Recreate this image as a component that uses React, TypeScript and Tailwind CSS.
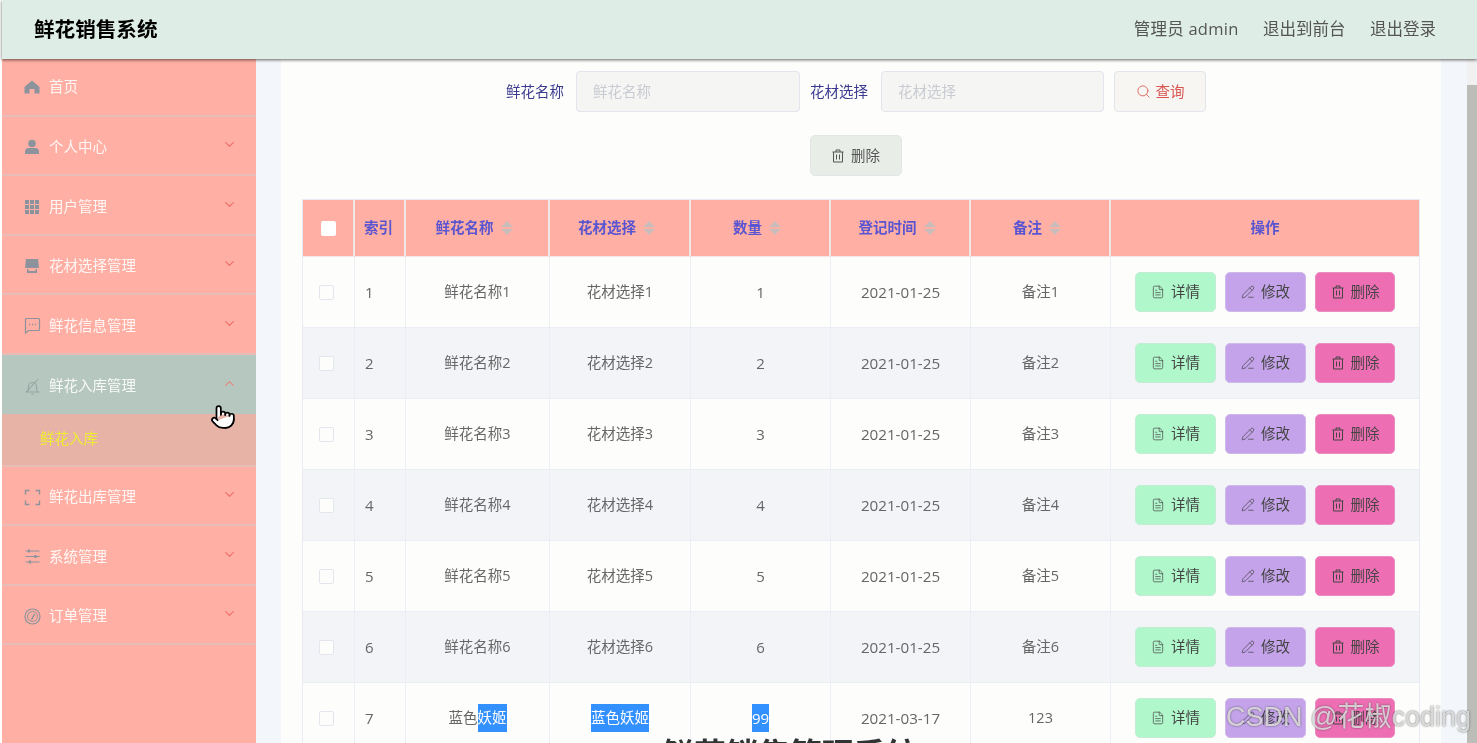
import { ChevronDown, ChevronUp, Search, FileText, PencilLine, Pointer } from "lucide-react";
import type { ReactNode } from "react";

const HomeIcon = () => (
  <svg width="16" height="16" viewBox="0 0 16 16" fill="currentColor">
    <path d="M8 1.5 15.5 8v6.5h-5V10h-5v4.5h-5V8z" />
  </svg>
);

const UserIcon = () => (
  <svg width="16" height="16" viewBox="0 0 16 16" fill="currentColor">
    <circle cx="8" cy="4.5" r="3.8" />
    <path d="M1 15v-2.5C1 10 3 9 5 9h6c2 0 4 1 4 3.5V15z" />
  </svg>
);

const GridIcon = () => (
  <svg width="16" height="16" viewBox="0 0 16 16" fill="currentColor">
    <path d="M1 1h4v4H1zM6 1h4v4H6zM11 1h4v4h-4zM1 6h4v4H1zM6 6h4v4H6zM11 6h4v4h-4zM1 11h4v4H1zM6 11h4v4H6zM11 11h4v4h-4z" />
  </svg>
);

const ShopIcon = () => (
  <svg width="16" height="16" viewBox="0 0 16 16" fill="currentColor">
    <path d="M2 1h12l1 9H1z" />
    <path d="M3 11h1.5v2h7v-2H13v4H3z" />
  </svg>
);

const ChatIcon = () => (
  <svg width="17" height="17" viewBox="0 0 17 17" fill="none" stroke="currentColor" strokeWidth="1.2">
    <path d="M2.5 1.5h12a1 1 0 0 1 1 1v10a1 1 0 0 1-1 1H5l-3.5 2.5v-13.500a1 1 0 0 1 1-1z" />
    <path d="M5 7.500h1.200M8 7.500h1.200M11 7.500h1.200" strokeWidth="1.500" />
  </svg>
);

const BellSlashIcon = () => (
  <svg width="17" height="17" viewBox="0 0 17 17" fill="none" stroke="currentColor" strokeWidth="1.1">
    <path d="M1.500 14h14M3.500 14c1-1.500 1-3 1-5.500a4 4 0 0 1 8 0c0 2.500 0 4 1 5.500" />
    <path d="M2.500 14 14 1" />
    <path d="M7.500 16h2" />
  </svg>
);

const CornersIcon = () => (
  <svg width="17" height="17" viewBox="0 0 17 17" fill="none" stroke="currentColor" strokeWidth="1.400">
    <path d="M5.500 1.500h-4v4M11.500 1.500h4v4M5.500 15.500h-4v-4M11.500 15.500h4v-4" />
  </svg>
);

const SliderIcon = () => (
  <svg width="17" height="17" viewBox="0 0 17 17" fill="none" stroke="currentColor" strokeWidth="1.200">
    <path d="M1.500 3h14M1.500 8.500h14M1.500 14h14" />
    <path d="M5 1.500v3M11.500 7v3M6 12.500v3" strokeWidth="2.200" />
  </svg>
);

const GaugeIcon = () => (
  <svg width="17" height="17" viewBox="0 0 17 17" fill="none" stroke="currentColor">
    <circle cx="8.500" cy="8.500" r="7.500" strokeWidth="1.200" />
    <circle cx="8.500" cy="8.500" r="5" strokeWidth="1" />
    <path d="M7.500 12 10.500 6" strokeWidth="1.600" />
  </svg>
);

const DeleteIcon = () => (
  <svg width="14" height="14" viewBox="0 0 14 14" fill="none" stroke="currentColor" strokeWidth="1">
    <path d="M1.500 3h11M5 3V1h4v2M2.500 3v10h9V3M5.500 5.500v5M8.500 5.500v5" />
  </svg>
);

const menus: { label: string; icon: ReactNode }[] = [
  { label: "个人中心", icon: <UserIcon /> },
  { label: "用户管理", icon: <GridIcon /> },
  { label: "花材选择管理", icon: <ShopIcon /> },
  { label: "鲜花信息管理", icon: <ChatIcon /> },
];

const menusBottom: { label: string; icon: ReactNode }[] = [
  { label: "鲜花出库管理", icon: <CornersIcon /> },
  { label: "系统管理", icon: <SliderIcon /> },
  { label: "订单管理", icon: <GaugeIcon /> },
];

const rows = [1, 2, 3, 4, 5, 6].map((n) => ({
  id: n,
  name: <>鲜花名称{n}</>,
  material: <>花材选择{n}</>,
  count: <>{n}</>,
  date: "2021-01-25",
  note: `备注${n}`,
}));

const cols = "grid grid-cols-[52px_51px_144px_141px_140px_140px_140px_308px]";

const MenuItem = ({ label, icon }: { label: string; icon: ReactNode }) => (
  <div className="h-[59.5px] flex items-center pt-[4px] pl-[20px] pr-[19px] border-b-2 border-[#e8bdb8] text-white/90">
    <span className="w-[20px] flex justify-center text-[#8d939c]">{icon}</span>
    <span className="ml-[7px] flex-1">{label}</span>
    <ChevronDown size={15} className="text-[#f0706c] -mt-[5px]" />
  </div>
);

const SortHead = ({ label }: { label: string }) => (
  <div className="h-full flex items-center justify-center border-r-2 border-[#f2e6e6] pr-[6px]">
    <span className="font-bold -mt-[1px]">{label}</span>
    <span className="ml-[7px] flex flex-col gap-[2px]">
      <span className="w-0 h-0 border-x-[6px] border-x-transparent border-b-[6px] border-b-[#c9bdbb]" />
      <span className="w-0 h-0 border-x-[6px] border-x-transparent border-t-[6px] border-t-[#c9bdbb]" />
    </span>
  </div>
);

const ActionButtons = () => (
  <div className="flex items-center justify-center gap-[9px] text-[#444]">
    <button className="w-[81px] h-[40px] rounded-[5px] bg-[#b1f7cc] border border-[#c5ecd4] flex items-center justify-center gap-[6px]">
      <FileText size={14} strokeWidth={1.2} />
      详情
    </button>
    <button className="w-[81px] h-[40px] rounded-[5px] bg-[#c4a3ea] border border-[#cfb8ea] flex items-center justify-center gap-[6px]">
      <PencilLine size={14} strokeWidth={1.2} />
      修改
    </button>
    <button className="w-[80px] h-[40px] rounded-[5px] bg-[#ee6eb4] border border-[#eb8cc0] flex items-center justify-center gap-[6px]">
      <DeleteIcon />
      删除
    </button>
  </div>
);

const Row = ({ id, name, material, count, date, note, striped }: {
  id: number;
  name: ReactNode;
  material: ReactNode;
  count: ReactNode;
  date: string;
  note: string;
  striped?: boolean;
}) => (
  <div className={`${cols} h-[71px] items-center border-b border-[#eceef5] text-[#666] ${striped ? "bg-[#f2f4f8]" : ""}`}>
    <div className="h-full flex items-center justify-center pr-[5px] border-r border-[#eceef5]">
      <span className="w-[15px] h-[15px] rounded-[2px] border border-[#e4e6ee] bg-[#fdfefc]" />
    </div>
    <div className="h-full flex items-center pl-[10px] text-[15px] border-r border-[#eceef5]">{id}</div>
    <div className="h-full flex items-center justify-center border-r border-[#eceef5]">{name}</div>
    <div className="h-full flex items-center justify-center border-r border-[#eceef5]">{material}</div>
    <div className="h-full flex items-center justify-center text-[15px] border-r border-[#eceef5]">{count}</div>
    <div className="h-full flex items-center justify-center text-[15.2px] border-r border-[#eceef5]">{date}</div>
    <div className="h-full flex items-center justify-center border-r border-[#eceef5]">{note}</div>
    <div className="h-full flex items-center justify-center">
      <ActionButtons />
    </div>
  </div>
);

const Selected = ({ children }: { children: ReactNode }) => (
  <span className="bg-[#3390ff] text-white py-[3px]">{children}</span>
);

export default function App() {
  return (
    <div className="relative h-[743px] overflow-hidden bg-white pl-[2px] text-[14.5px] blur-[0.35px] font-['Open_Sans','Noto_Sans_CJK_SC',sans-serif]">
      <header className="relative z-10 h-[59px] flex items-center justify-between pl-[32px] pr-[41px] bg-[#deeee6] shadow-[0_1px_3px_rgba(0,0,0,0.6)]">
        <div className="text-[20.6px] font-bold text-black">鲜花销售系统</div>
        <div className="flex gap-[24.5px] text-[16.5px] text-[#555]">
          <span className="tracking-[0.25px]">管理员 admin</span>
          <span>退出到前台</span>
          <span>退出登录</span>
        </div>
      </header>

      <div className="flex h-[684px]">
        <aside className="w-[254px] shrink-0 bg-[#ffafa3]">
          <div className="h-[57.5px] flex items-center pl-[20px] border-b-2 border-[#e8bdb8] text-white/90">
            <span className="w-[20px] flex justify-center text-[#8d939c]"><HomeIcon /></span>
            <span className="ml-[7px]">首页</span>
          </div>
          {menus.map((m) => (
            <MenuItem key={m.label} label={m.label} icon={m.icon} />
          ))}
          <div className="h-[59px] flex items-center pt-[4px] pl-[20px] pr-[19px] bg-[#b5c7bf] text-white/90">
            <span className="w-[20px] flex justify-center text-[#99a3a5]"><BellSlashIcon /></span>
            <span className="ml-[7px] flex-1">鲜花入库管理</span>
            <ChevronUp size={15} className="text-[#e58a80] -mt-[5px]" />
          </div>
          <div className="h-[53px] flex items-center pl-[38px] bg-[#e6b3a6] border-b-2 border-[#e8bdb8] text-[#eeee30]">
            鲜花入库
          </div>
          {menusBottom.map((m) => (
            <MenuItem key={m.label} label={m.label} icon={m.icon} />
          ))}
        </aside>

        <main className="flex-1 flex bg-[#f3f6fa] pl-[25px] pr-[26px]">
          <div className="flex-1 bg-[#fdfefc] px-[21px] pt-[12px]">
            <div className="flex items-center h-[41px] pl-[204px]">
              <span className="text-[#3b3a8f]">鲜花名称</span>
              <div className="ml-[12px] w-[224px] h-[41px] flex items-center pl-[16px] rounded-[4px] border border-[#e3e4ec] bg-[#f5f5f3] text-[#c9cbd2]">鲜花名称</div>
              <span className="ml-[10px] text-[#3b3a8f]">花材选择</span>
              <div className="ml-[13px] w-[223px] h-[41px] flex items-center pl-[16px] rounded-[4px] border border-[#e3e4ec] bg-[#f5f5f3] text-[#c9cbd2]">花材选择</div>
              <button className="ml-[10px] w-[92px] h-[41px] flex items-center justify-center gap-[5px] rounded-[4px] border border-[#e3e4ec] bg-[#f7f6f3] text-[#d9534f]">
                <Search size={15} strokeWidth={1.3} />
                查询
              </button>
            </div>
            <div className="flex justify-center mt-[23px] pr-[11px]">
              <button className="w-[92px] h-[41px] flex items-center justify-center gap-[6px] rounded-[5px] border border-[#e1e6e6] bg-[#e8ede8] text-[#555]">
                <DeleteIcon />
                删除
              </button>
            </div>

            <div className="mt-[23px] border-x border-t border-[#e8ebf3]">
              <div className={`${cols} h-[57px] items-center bg-[#ffafa3] text-[#5a55d0] border-b border-[#f2e6e6]`}>
                <div className="h-full flex items-center justify-center border-r-2 border-[#f2e6e6]">
                  <span className="w-[15px] h-[15px] rounded-[2px] bg-white" />
                </div>
                <div className="h-full flex items-center pl-[9px] border-r-2 border-[#f2e6e6] font-bold">索引</div>
                <SortHead label="鲜花名称" />
                <SortHead label="花材选择" />
                <SortHead label="数量" />
                <SortHead label="登记时间" />
                <SortHead label="备注" />
                <div className="h-full flex items-center justify-center font-bold">操作</div>
              </div>
              {rows.map((r, i) => (
                <Row key={r.id} {...r} striped={i % 2 === 1} />
              ))}
              <Row
                id={7}
                name={<>蓝色<Selected>妖姬</Selected></>}
                material={<Selected>蓝色妖姬</Selected>}
                count={<Selected>99</Selected>}
                date="2021-03-17"
                note="123"
              />
            </div>
          </div>
        </main>

        <div className="w-[10px] shrink-0 bg-[#f1f1f1] pt-[26px]">
          <div className="h-full bg-[#bcbdb9]" />
        </div>
      </div>

      {/* overlays: cursor, watermark, clipped heading */}
      <Pointer size={26} fill="white" strokeWidth={1.6} className="absolute left-[210px] top-[404px] text-black" />
      <div className="absolute left-[1226px] top-[697px] text-[27px] text-white/70 [text-shadow:0_0_2px_rgba(70,70,70,0.9)] font-['Liberation_Sans','Noto_Sans_CJK_SC',sans-serif] whitespace-nowrap">
        CSDN @花椒coding
      </div>
      <div className="absolute left-[600px] top-[738px] text-[32px] leading-none font-bold text-[#333] whitespace-nowrap">
        (一) 鲜花销售管理系统
      </div>
    </div>
  );
}
